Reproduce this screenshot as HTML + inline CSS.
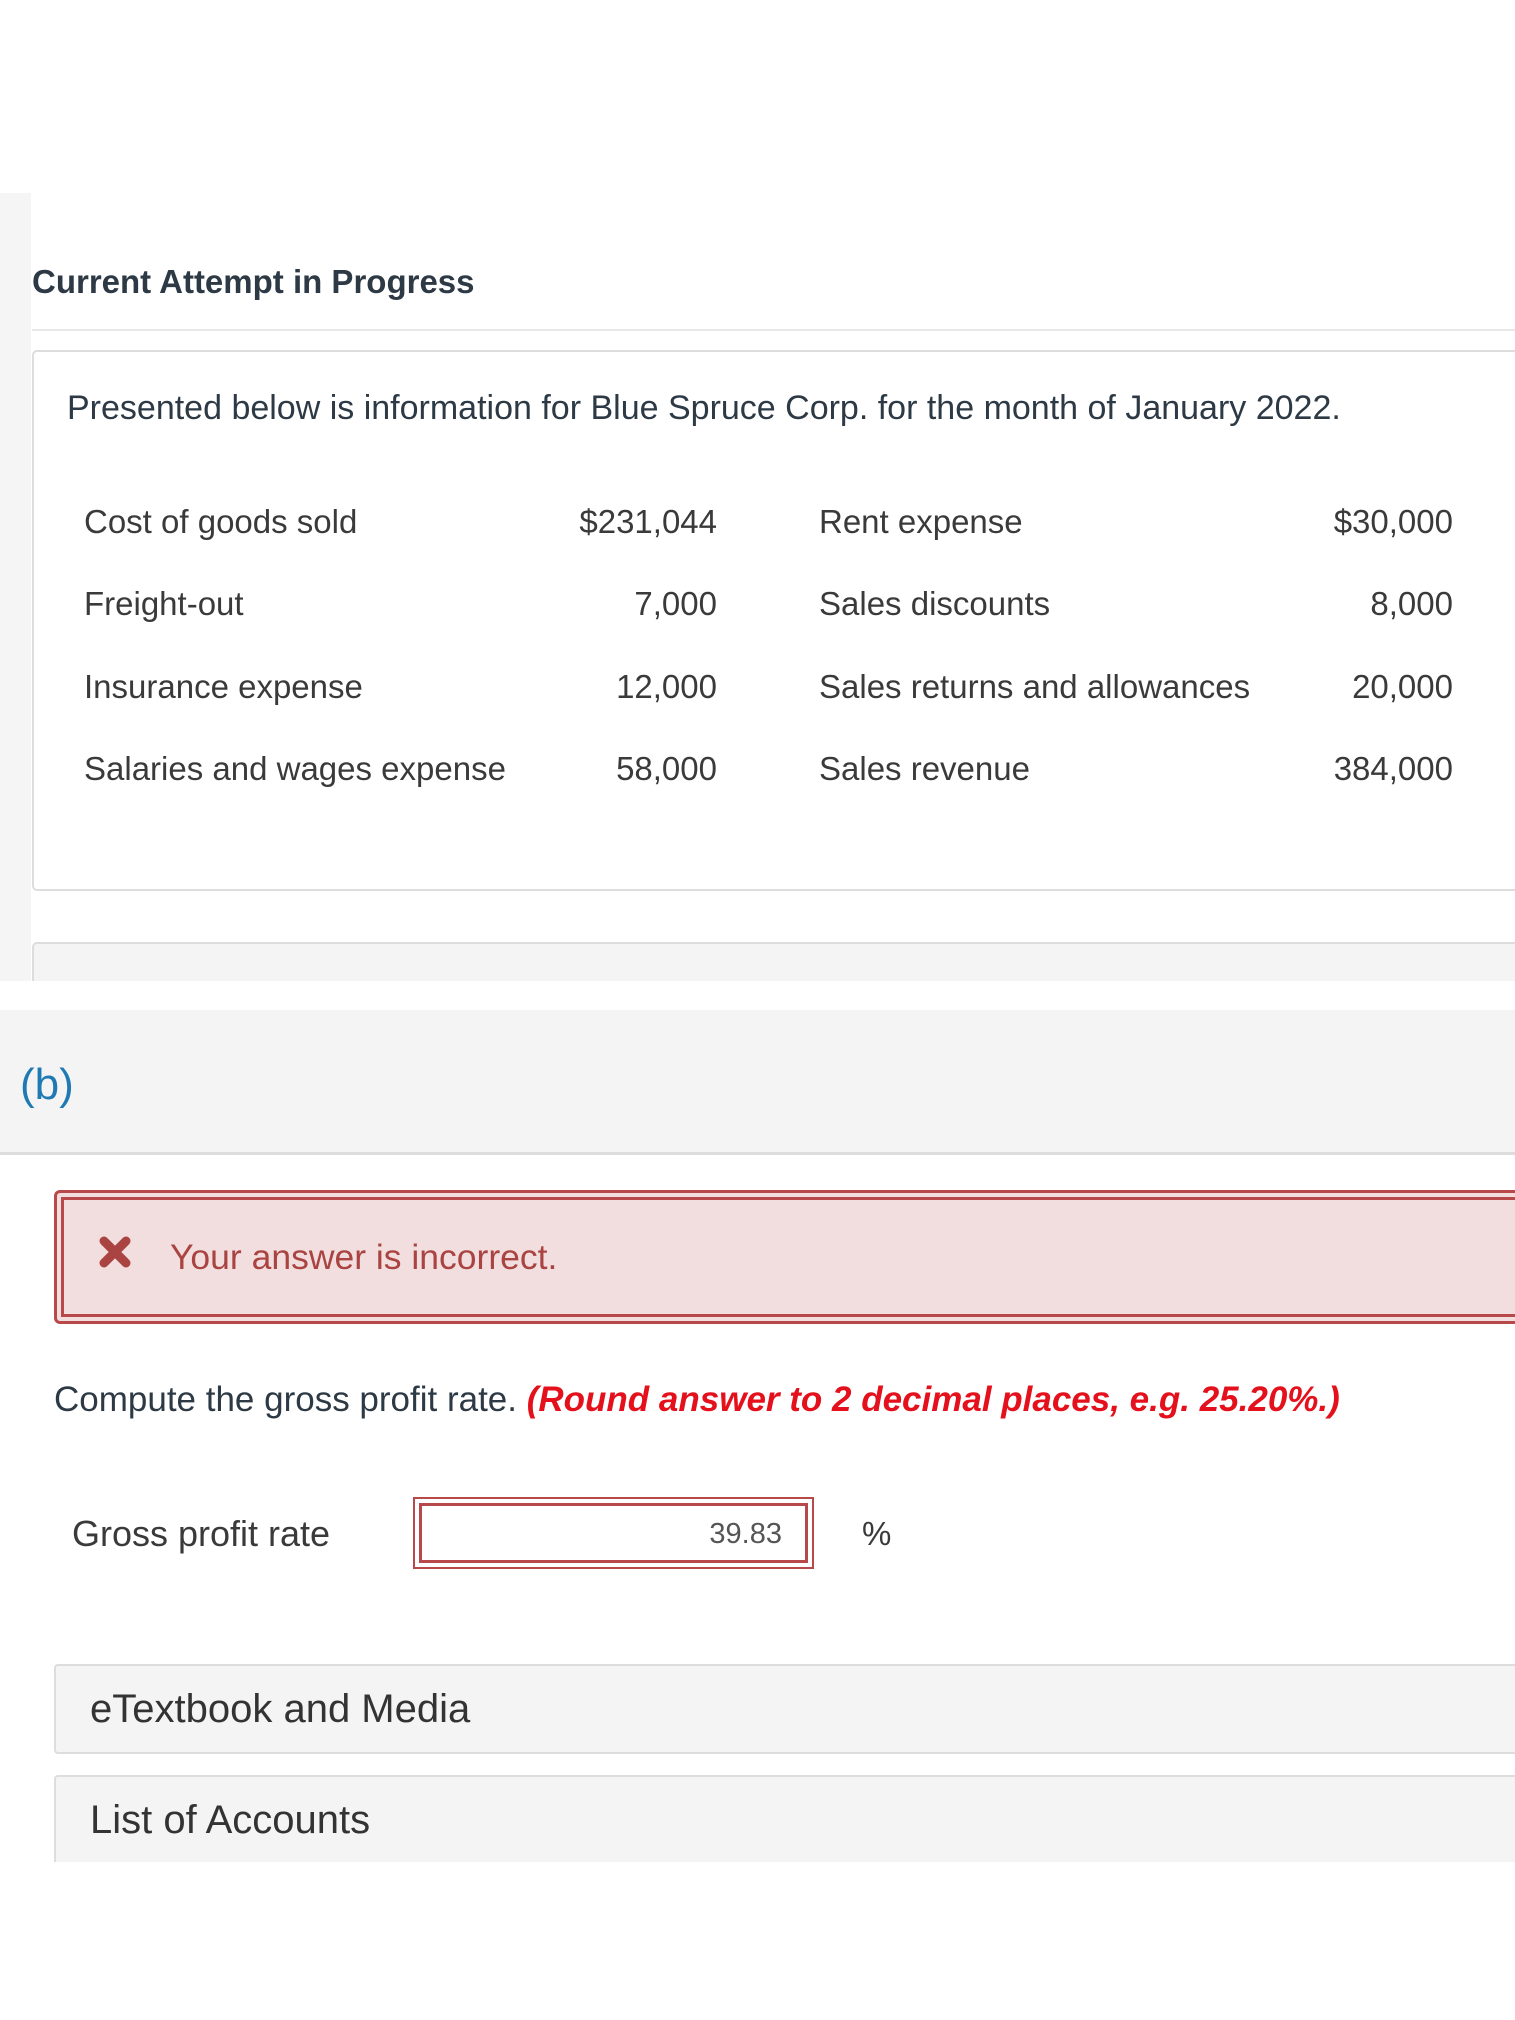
<!DOCTYPE html>
<html><head><meta charset="utf-8"><style>
body{margin:0;width:1515px;height:2020px;background:#fff;font-family:"Liberation Sans",sans-serif;color:#333;position:relative;overflow:hidden}
.a{position:absolute;white-space:nowrap}
.t{font-size:33px;line-height:40px;color:#3a3a3a}
</style></head><body>
<div class="a" style="left:0;top:193px;width:31px;height:788px;background:#f5f5f5"></div>
<div class="a" style="left:32px;top:262px;font-size:33px;font-weight:bold;color:#2d3a45;line-height:40px">Current Attempt in Progress</div>
<div class="a" style="left:32px;top:329px;width:1483px;height:2px;background:#e8e8e8"></div>
<div class="a" style="left:32px;top:350px;width:1490px;height:541px;border:2px solid #ddd;border-radius:5px;box-sizing:border-box"></div>
<div class="a t" style="left:67px;top:388px;font-size:34px;color:#2d3a45">Presented below is information for Blue Spruce Corp. for the month of January 2022.</div>

<div class="a t" style="left:84px;top:502px">Cost of goods sold</div>
<div class="a t" style="right:798px;top:502px">$231,044</div>
<div class="a t" style="left:819px;top:502px">Rent expense</div>
<div class="a t" style="right:62px;top:502px">$30,000</div>

<div class="a t" style="left:84px;top:584px">Freight-out</div>
<div class="a t" style="right:798px;top:584px">7,000</div>
<div class="a t" style="left:819px;top:584px">Sales discounts</div>
<div class="a t" style="right:62px;top:584px">8,000</div>

<div class="a t" style="left:84px;top:667px">Insurance expense</div>
<div class="a t" style="right:798px;top:667px">12,000</div>
<div class="a t" style="left:819px;top:667px">Sales returns and allowances</div>
<div class="a t" style="right:62px;top:667px">20,000</div>

<div class="a t" style="left:84px;top:749px">Salaries and wages expense</div>
<div class="a t" style="right:798px;top:749px">58,000</div>
<div class="a t" style="left:819px;top:749px">Sales revenue</div>
<div class="a t" style="right:62px;top:749px">384,000</div>

<div class="a" style="left:32px;top:942px;width:1490px;height:50px;border:2px solid #ddd;border-radius:5px;background:#f4f4f4;box-sizing:border-box"></div>
<div class="a" style="left:0;top:981px;width:1515px;height:29px;background:#fff"></div>

<div class="a" style="left:0;top:1010px;width:1515px;height:142px;background:#f4f4f4;border-bottom:3px solid #ddd"></div>
<div class="a" style="left:20px;top:1060px;font-size:44px;line-height:50px;color:#1f7ab3">(b)</div>

<div class="a" style="left:54px;top:1190px;width:1475px;height:134px;border:3px solid #b8494b;border-radius:6px;background:#f2dede;box-sizing:border-box"></div>
<div class="a" style="left:61px;top:1197px;width:1470px;height:120px;border:3px solid #b8494b;box-sizing:border-box"></div>
<svg class="a" style="left:98px;top:1235px" width="34" height="34" viewBox="0 0 34 34"><path d="M6 6L28 28M28 6L6 28" stroke="#a94442" stroke-width="9" stroke-linecap="round"/></svg>
<div class="a" style="left:170px;top:1237px;font-size:35.5px;line-height:40px;color:#a94442">Your answer is incorrect.</div>

<div class="a" style="left:54px;top:1380px;font-size:35px;line-height:40px;color:#2d3a45">Compute the gross profit rate. <b style="color:#e4101b;font-style:italic">(Round answer to 2 decimal places, e.g. 25.20%.)</b></div>

<div class="a t" style="left:72px;top:1514px;font-size:36px">Gross profit rate</div>
<div class="a" style="left:413px;top:1497px;width:401px;height:72px;border:2px solid #b8494b;box-sizing:border-box"></div>
<div class="a" style="left:419px;top:1503px;width:389px;height:60px;border:3px solid #b8494b;box-sizing:border-box"></div>
<div class="a" style="right:733px;top:1516px;font-size:29px;line-height:36px;color:#555">39.83</div>
<div class="a t" style="left:862px;top:1514px;font-size:33px">%</div>

<div class="a" style="left:54px;top:1664px;width:1470px;height:90px;border:2px solid #ddd;border-radius:4px;background:#f4f4f4;box-sizing:border-box"></div>
<div class="a" style="left:90px;top:1686px;font-size:40px;line-height:46px;color:#333">eTextbook and Media</div>
<div class="a" style="left:54px;top:1775px;width:1470px;height:100px;border:2px solid #ddd;border-radius:4px;background:#f4f4f4;box-sizing:border-box"></div>
<div class="a" style="left:0;top:1862px;width:1515px;height:158px;background:#fff"></div>
<div class="a" style="left:90px;top:1797px;font-size:40px;line-height:46px;color:#333">List of Accounts</div>
</body></html>
